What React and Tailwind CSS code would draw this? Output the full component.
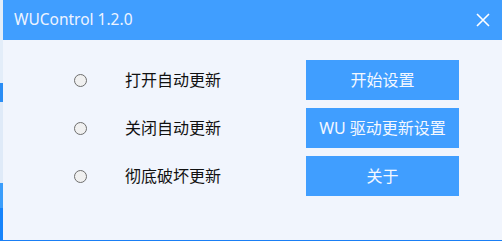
import React from "react";

const rows = [
  { label: "打开自动更新", btn: "开始设置" },
  { label: "关闭自动更新", btn: "WU 驱动更新设置" },
  { label: "彻底破坏更新", btn: "关于" },
];

export default function App() {
  return (
    <div
      className="w-[502px] h-[241px] flex flex-col overflow-hidden"
      style={{ fontFamily: '"Noto Sans", "Noto Sans CJK SC", sans-serif' }}
    >
      <div className="flex flex-1 min-h-0">
        <div className="w-[3px] flex flex-col">
          <div className="h-[83px] bg-[#e3edf9]" />
          <div className="h-[19px] bg-[#2a8df5]" />
          <div className="h-[81px] bg-[#dfeaf8]" />
          <div className="h-[25px] bg-[#3a9dfb]" />
          <div className="flex-1 bg-[#1683fb]" />
        </div>
        <div className="flex-1 flex flex-col">
          <div className="h-[40px] bg-[#409eff] flex items-center justify-between pl-[11px] pr-[12px]">
            <span className="text-[15.5px] text-[#eef4ff] leading-none">WUControl 1.2.0</span>
            <svg width="14" height="14" viewBox="0 0 14 14" className="mt-[-1px]">
              <path d="M1 1 L13 13 M13 1 L1 13" stroke="#ffffff" strokeWidth="1.6" fill="none" />
            </svg>
          </div>
          <div className="flex-1 bg-[#f1f5fd] pt-[20px] flex flex-col gap-[8px]">
            {rows.map((r) => (
              <div
                key={r.label}
                className="grid grid-cols-[13px_38px_181px_153px] pl-[71px] h-[40px] items-center"
              >
                <span className="w-[13px] h-[13px] rounded-full border border-[#6e6e6e] bg-[#f0f0f0]" />
                <span />
                <span className="text-[16px] text-[#111111] leading-none">{r.label}</span>
                <button className="h-[40px] bg-[#409eff] text-[#f4f8ff] text-[16px] leading-none flex items-center justify-center">
                  {r.btn}
                </button>
              </div>
            ))}
          </div>
        </div>
      </div>
      <div className="h-[1px] bg-[#1a7ff5]" />
    </div>
  );
}
